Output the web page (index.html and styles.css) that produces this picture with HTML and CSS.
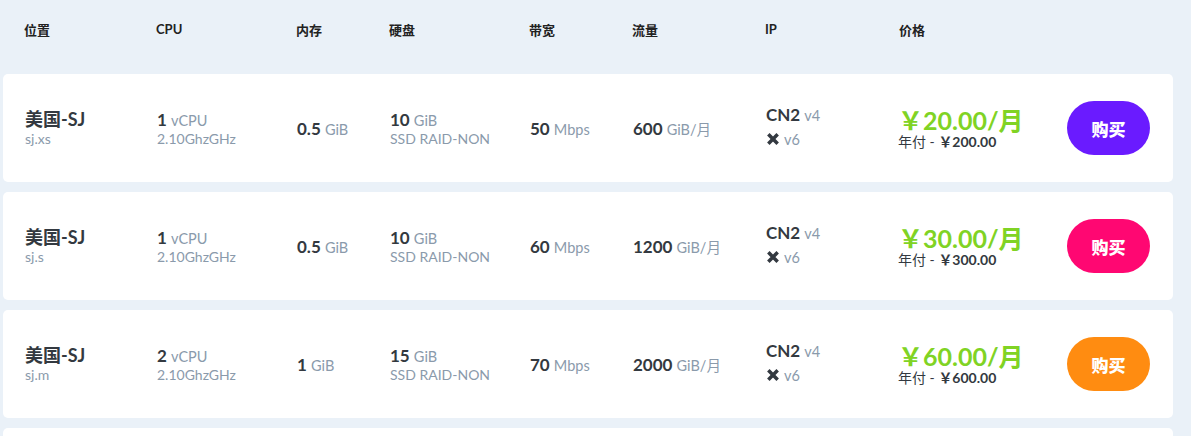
FILE: index.html
```html
<!DOCTYPE html>
<html lang="zh">
<head>
<meta charset="utf-8">
<link rel="stylesheet" href="styles.css">
<title>价格</title>
</head>
<body>
<div class="table">
  <div class="head row">
    <div>位置</div><div>CPU</div><div>内存</div><div>硬盘</div><div>带宽</div><div>流量</div><div>IP</div><div>价格</div><div></div>
  </div>

  <div class="card row">
    <div><div class="name">美国-SJ</div><div class="sub">sj.xs</div></div>
    <div><div><b class="num">1</b> <span class="unit">vCPU</span></div><div class="sub">2.10GhzGHz</div></div>
    <div><b class="num">0.5</b> <span class="unit">GiB</span></div>
    <div><div><b class="num">10</b> <span class="unit">GiB</span></div><div class="sub">SSD RAID-NON</div></div>
    <div><b class="num">50</b> <span class="unit">Mbps</span></div>
    <div><b class="num">600</b> <span class="unit">GiB/月</span></div>
    <div class="ip"><div><b class="num">CN2</b> <span class="unit">v4</span></div><div><svg class="x" viewBox="0 0 12 12"><path d="M2 2L10 10M10 2L2 10" /></svg> <span class="unit">v6</span></div></div>
    <div><div class="price">￥20.00/月</div><div class="year">年付 - <b>￥200.00</b></div></div>
    <div><button class="buy purple">购买</button></div>
  </div>

  <div class="card row">
    <div><div class="name">美国-SJ</div><div class="sub">sj.s</div></div>
    <div><div><b class="num">1</b> <span class="unit">vCPU</span></div><div class="sub">2.10GhzGHz</div></div>
    <div><b class="num">0.5</b> <span class="unit">GiB</span></div>
    <div><div><b class="num">10</b> <span class="unit">GiB</span></div><div class="sub">SSD RAID-NON</div></div>
    <div><b class="num">60</b> <span class="unit">Mbps</span></div>
    <div><b class="num">1200</b> <span class="unit">GiB/月</span></div>
    <div class="ip"><div><b class="num">CN2</b> <span class="unit">v4</span></div><div><svg class="x" viewBox="0 0 12 12"><path d="M2 2L10 10M10 2L2 10" /></svg> <span class="unit">v6</span></div></div>
    <div><div class="price">￥30.00/月</div><div class="year">年付 - <b>￥300.00</b></div></div>
    <div><button class="buy pink">购买</button></div>
  </div>

  <div class="card row">
    <div><div class="name">美国-SJ</div><div class="sub">sj.m</div></div>
    <div><div><b class="num">2</b> <span class="unit">vCPU</span></div><div class="sub">2.10GhzGHz</div></div>
    <div><b class="num">1</b> <span class="unit">GiB</span></div>
    <div><div><b class="num">15</b> <span class="unit">GiB</span></div><div class="sub">SSD RAID-NON</div></div>
    <div><b class="num">70</b> <span class="unit">Mbps</span></div>
    <div><b class="num">2000</b> <span class="unit">GiB/月</span></div>
    <div class="ip"><div><b class="num">CN2</b> <span class="unit">v4</span></div><div><svg class="x" viewBox="0 0 12 12"><path d="M2 2L10 10M10 2L2 10" /></svg> <span class="unit">v6</span></div></div>
    <div><div class="price">￥60.00/月</div><div class="year">年付 - <b>￥600.00</b></div></div>
    <div><button class="buy orange">购买</button></div>
  </div>

  <div class="card row"></div>
</div>
</body>
</html>
```

FILE: styles.css
```css
html, body {
  margin: 0;
  padding: 0;
  background: #eaf1f8;
  font-family: Lato, "Noto Sans CJK SC", sans-serif;
  color: #333940;
}
.table {
  width: 1170px;
  margin-left: 3px;
  display: flex;
  flex-direction: column;
  gap: 10px;
}
.row {
  display: grid;
  grid-template-columns: 132px 140px 93px 140px 103px 133px 134px 1fr 83px;
  align-items: center;
}
.head {
  height: 64px;
  padding: 0 23px 0 21px;
  font-size: 13px;
  font-weight: 700;
  color: #222;
}
.head > div { position: relative; top: -3px; }
.card {
  background: #fff;
  border-radius: 5px;
  height: 108px;
  padding: 0 23px 0 22px;
  box-sizing: border-box;
}
.name {
  font-size: 18px;
  font-weight: 700;
  line-height: 22px;
}
.sub {
  font-size: 14px;
  color: #8a9aab;
  line-height: 18px;
}
.num {
  font-size: 17px;
  font-weight: 700;
  color: #333940;
}
.unit {
  font-size: 14.5px;
  color: #8a9aab;
}
.ip {
  line-height: 23px;
  margin-top: -2px;
}
.x {
  width: 14px;
  height: 14px;
  vertical-align: -1px;
}
.x path {
  stroke: #333940;
  stroke-width: 3;
  fill: none;
}
.price {
  font-size: 25px;
  font-weight: 700;
  color: #80d324;
  line-height: 28px;
  margin-left: -2px;
}
.year {
  font-size: 14px;
  color: #333940;
  line-height: 16px;
  margin-left: -2px;
}
.year b { font-weight: 700; }
.buy {
  width: 83px;
  height: 54px;
  border: 0;
  border-radius: 27px;
  color: #fff;
  font-family: "Noto Sans CJK SC", sans-serif;
  font-size: 17px;
  font-weight: 900;
  padding: 0;
}
.purple { background: #6a1bff; }
.pink { background: #ff0772; }
.orange { background: #ff8c11; }
```
